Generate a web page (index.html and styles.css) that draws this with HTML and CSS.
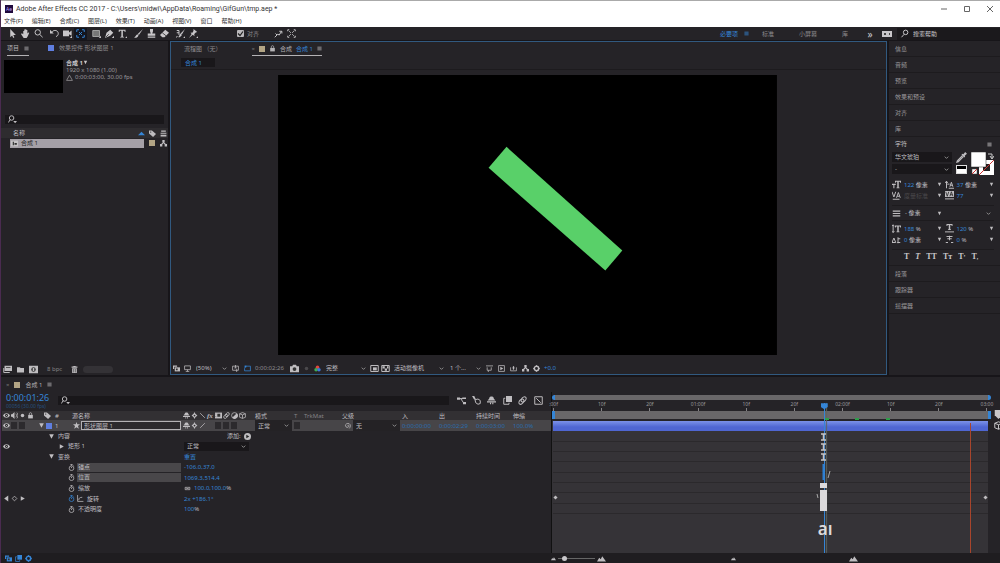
FILE: index.html
```html
<!DOCTYPE html>
<html lang="zh-CN">
<head>
<meta charset="utf-8">
<title>Adobe After Effects CC 2017</title>
<link rel="stylesheet" href="styles.css">
</head>
<body>
<svg class="sprite" aria-hidden="true">
  <symbol id="arrow" viewBox="0 0 12 12"><path d="M3 0v11l2.500-2.500L7 12l1.500-1L7 8h3.500z"/></symbol>
  <symbol id="hand" viewBox="0 0 12 12"><path d="M3 7V2.500h1.300V5 .8h1.400V5 .3h1.400V5 1.200h1.400V6l1.200-1.500 1.300.6L9 9.500 7.500 12h-4L0 6.500l1.200-.7z"/></symbol>
  <symbol id="zoom" viewBox="0 0 12 12"><g class="ln"><circle cx="5" cy="4.500" r="3.600"/><path d="M7.600 7.200 11.500 11"/></g></symbol>
  <symbol id="find" viewBox="0 0 12 12"><g class="ln"><circle cx="7.500" cy="4.500" r="3"/><path d="M5.500 7 2 11"/></g></symbol>
  <symbol id="finddrop" viewBox="0 0 12 12"><g class="ln"><circle cx="4.800" cy="4" r="3"/><path d="M3 6 .5 10"/></g><path d="M7 8h5l-2.500 3z"/></symbol>
  <symbol id="rotate" viewBox="0 0 12 12"><path class="ln" d="M3 3.500c3-3 8-1.500 8 2.500 0 2-1 3.500-3 4"/><path d="M0 1v5h5z"/></symbol>
  <symbol id="camera" viewBox="0 0 12 12"><path d="M0 2h8v2.500L11.500 2v7L8 7v2.500H0zM9 12l3-3v3z"/></symbol>
  <symbol id="anchor" viewBox="0 0 12 12"><path class="ln" d="M1 4V1h3M8 1h3v3M11 8v3H8M4 11H1V8M4 4l4 4M8 4 4 8"/></symbol>
  <symbol id="rect" viewBox="0 0 12 12"><path fill="#777" stroke="#bbb" d="M1 2h9v8H1z"/><path d="M9 12l3-3v3z"/></symbol>
  <symbol id="pen" viewBox="0 0 12 12"><path d="M0 12 2 5l5-4 4 4-4 4zM9 12l3-3v3z"/><path stroke="#222" d="M1 11l4-4"/></symbol>
  <symbol id="type" viewBox="0 0 12 12"><path d="M1 1h9v3H9L8.500 2.200H6.500V10l1.500.5v.7H3v-.7l1.500-.5V2.200h-2L2 4H1zM9.500 12l2.500-2.500V12z"/></symbol>
  <symbol id="brush" viewBox="0 0 12 12"><path d="M12 0 6.500 8 5 6.500zM4.500 7 6 8.500C5 11 3 12 0 11.500 2 11 2.500 8 4.500 7z"/></symbol>
  <symbol id="stamp" viewBox="0 0 12 12"><path d="M4 0h4v3L7 6h4v3H1V6h4L4 3zM1 10h10v1.500H1z"/></symbol>
  <symbol id="eraser" viewBox="0 0 12 12"><path d="M7 1l5 4-6 6H3L0 8z"/><path stroke="#222" d="M3 5l5 4"/></symbol>
  <symbol id="roto" viewBox="0 0 12 12"><path d="M12 0 8 7 6 6zM6 6l2 2-3 3H3z"/><path class="ln" d="M1 2h3v6M1 5h3M2 10l-2 1"/><path d="M9.500 12l2.500-2.500V12z"/></symbol>
  <symbol id="pin" viewBox="0 0 12 12"><path d="M6 0l5 4-2 .5-2 2 .3 3L5 7.500 0 12l3.500-5.500L2 5l3-.3L6 2zM9.500 12l2.500-2.500V12z"/></symbol>
  <symbol id="snap" viewBox="0 0 12 12"><path class="ln" d="M1 11l4-4 2 1 3-5M7 3h3.500v3M2 6l2 2"/></symbol>
  <symbol id="frame" viewBox="0 0 12 12"><path class="ln" d="M1 3V1h2M9 1h2v2M11 9v2H9M3 11H1V9M3 3l2 2M9 3 7 5M3 9l2-2M9 9 7 7"/></symbol>
  <symbol id="menu" viewBox="0 0 12 12"><path d="M1 2h10v1.600H1zM1 5.200h10v1.600H1zM1 8.400h10V10H1z"/></symbol>
  <symbol id="tri" viewBox="0 0 12 12"><path d="M2 2h8L6 10z"/></symbol>
  <symbol id="triright" viewBox="0 0 12 12"><path d="M3 2v8l7-4z"/></symbol>
  <symbol id="trileft" viewBox="0 0 12 12"><path d="M9 1v10L2 6z"/></symbol>
  <symbol id="triup" viewBox="0 0 12 12"><path d="M0 9h12L6 3z"/></symbol>
  <symbol id="tag" viewBox="0 0 12 12"><path d="M0 1h5l7 6-5 5-7-6z"/><circle cx="3" cy="3.500" r="1" fill="#222"/></symbol>
  <symbol id="stack" viewBox="0 0 12 12"><path d="M2 1h8v2H2zM1 4.500h10v2H1zM1 8h10v3H1z"/></symbol>
  <symbol id="tree" viewBox="0 0 12 12"><path d="M4 0h4v4H7l3 3h2v4H8V7.500L6 5.500l-2 2V11H0V7h2l3-3H4z"/></symbol>
  <symbol id="comp" viewBox="0 0 12 12"><path fill="#c5c3c5" d="M0 1h12v10H0z"/><path fill="#333" d="M3 3h2v6H3zM6 5h4v3H6z"/></symbol>
  <symbol id="folder" viewBox="0 0 12 12"><path d="M0 2h5l1 1.500h6V11H0z"/></symbol>
  <symbol id="footage" viewBox="0 0 12 12"><path d="M2 1h10v7H2z"/><path class="ln" d="M9 10H1V4"/><path fill="#333" d="M4 3h6v1H4z"/></symbol>
  <symbol id="newcomp" viewBox="0 0 12 12"><path d="M0 1h12v10H0z"/><circle cx="6" cy="6" r="3" fill="#333"/><path d="M5 4h2v4H5z"/></symbol>
  <symbol id="trash" viewBox="0 0 12 12"><path d="M4 0h4v1h3v2H1V1h3zM2 4h8v8H2z"/><path stroke="#333" d="M4.500 5v6M7.500 5v6"/></symbol>
  <symbol id="layers" viewBox="0 0 12 12"><path d="M0 1h7v2H2v4H0z"/><path d="M3 4h9v7H3z"/><path fill="#333" d="M5 6h3v3H5z"/></symbol>
  <symbol id="monitor" viewBox="0 0 12 12"><path class="ln" d="M1 1.500h10v6.500H1zM3 11h6M6 8v3"/></symbol>
  <symbol id="guides" viewBox="0 0 12 12"><path class="ln" d="M1 2h10v7H1zM6 0v5M8 7v5M4 5h4"/></symbol>
  <symbol id="mask" viewBox="0 0 12 12"><path class="ln" d="M3 2h8v8H1V6z"/><path d="M1 1h3v3H1z"/></symbol>
  <symbol id="photo" viewBox="0 0 12 12"><path d="M0 3h3l1-2h4l1 2h3v8H0z"/><circle cx="6" cy="6.700" r="2.500" fill="#333"/></symbol>
  <symbol id="rgb" viewBox="0 0 12 12"><circle cx="6" cy="4" r="3" fill="#e0483c"/><circle cx="3.500" cy="8" r="3" fill="#3fae52"/><circle cx="8.500" cy="8" r="3" fill="#3f77e0"/></symbol>
  <symbol id="region" viewBox="0 0 12 12"><path class="ln" d="M1 2h10v8H1z"/><path d="M4 4.500h5v4H4z"/></symbol>
  <symbol id="checker" viewBox="0 0 12 12"><path class="ln" d="M1 2h10v8H1z"/><path d="M2 3h3v3H2zM5 6h3v3H5zM8 3h2v3H8z"/></symbol>
  <symbol id="pixel" viewBox="0 0 12 12"><path class="ln" d="M0 1.500h12M2 4v5h7V4M4 9v3"/></symbol>
  <symbol id="fast" viewBox="0 0 12 12"><path class="ln" d="M1 1h10v10H1z"/><path d="M4 3v6l5-3z"/></symbol>
  <symbol id="chart" viewBox="0 0 12 12"><path class="ln" d="M1 4v6h10V4M4 5h4"/><path d="M5 2h2v6H5z"/></symbol>
  <symbol id="gear" viewBox="0 0 12 12"><circle cx="6" cy="6" r="3.800" fill="none" stroke="currentColor" stroke-width="2.600"/><path class="ln" d="M6 0v2M6 10v2M0 6h2M10 6h2"/></symbol>
  <symbol id="dropper" viewBox="0 0 12 12"><path class="ln" d="M7 4 1.500 9.500 1 11l1.500-.5L8 5"/><path d="M6 3l1-1 1 .5L10 0l2 2-2.500 2 .5 1-1 1z"/></symbol>
  <symbol id="eye" viewBox="0 0 12 12"><path d="M0 6c3-5 9-5 12 0-3 5-9 5-12 0z"/><circle cx="6" cy="6" r="2.400" fill="#222"/><circle cx="6" cy="6" r="1"/></symbol>
  <symbol id="sound" viewBox="0 0 12 12"><path d="M0 4h2l4-4v12L2 8H0z"/><path class="ln" d="M8 3c2 2 2 4 0 6M10 1c2.500 3 2.500 7 0 10"/></symbol>
  <symbol id="dot" viewBox="0 0 12 12"><circle cx="6" cy="6" r="3"/></symbol>
  <symbol id="lock" viewBox="0 0 12 12"><path d="M2 5h8v6H2z"/><path class="ln" d="M4 5V3c0-2.500 4-2.500 4 0v2"/></symbol>
  <symbol id="shy" viewBox="0 0 12 12"><path d="M1 6c0-2 2-1 2-3 0-3 6-3 6 0 0 2 2 1 2 3zM0 7h12v1.500H0zM4 9h1.500v2H4zM7 9h1.500v2H7z"/></symbol>
  <symbol id="sun" viewBox="0 0 12 12"><path d="M6 0l1.500 3L11 6 7.500 9 6 12 4.500 9 1 6l3.500-3z"/><circle cx="6" cy="6" r="1.500" fill="#333"/></symbol>
  <symbol id="slash" viewBox="0 0 12 12"><path class="ln" d="M2 2l8 8"/></symbol>
  <symbol id="slashup" viewBox="0 0 12 12"><path class="ln" d="M2 10l8-8"/></symbol>
  <symbol id="film" viewBox="0 0 12 12"><path d="M0 1h12v10H0z"/><path fill="#333" d="M4 3h5v5H4zM1 3h1v1H1zM1 7h1v1H1z"/></symbol>
  <symbol id="blur" viewBox="0 0 12 12"><g class="ln"><ellipse cx="7.500" cy="4.500" rx="2.600" ry="4" transform="rotate(40 7.500 4.500)"/><ellipse cx="4.500" cy="7.500" rx="2.600" ry="4" transform="rotate(40 4.500 7.500)"/></g></symbol>
  <symbol id="half" viewBox="0 0 12 12"><circle class="ln" cx="6" cy="6" r="5"/><path d="M10 2A5.500 5.500 0 1 1 2 10z"/></symbol>
  <symbol id="cube" viewBox="0 0 12 12"><path class="ln" d="M6 1l5 2v6l-5 2-5-2V3zM1 3l5 2 5-2M6 5v6"/></symbol>
  <symbol id="star" viewBox="0 0 12 12"><path d="M6 0l1.500 4H12L8.500 7 10 11.500 6 9l-4 2.500L3.500 7 0 4h4.500z"/></symbol>
  <symbol id="watch" viewBox="0 0 12 12"><path class="ln" d="M4 1h4M6 1v2M6 7V5M9.500 2.500l1 1"/><circle class="ln" cx="6" cy="7.200" r="4"/></symbol>
  <symbol id="graph" viewBox="0 0 12 12"><path class="ln" d="M1 0v11h10M3 9c0-4 2-5 6-5"/></symbol>
  <symbol id="kf" viewBox="0 0 12 12"><path class="ln" d="M6 2l4 4-4 4-4-4z"/></symbol>
  <symbol id="kffull" viewBox="0 0 12 12"><path d="M6 1l5 5-5 5-5-5z"/></symbol>
  <symbol id="link" viewBox="0 0 12 12"><path class="ln" d="M6 4H2v4h4M6 4h4v4H6M4 6h4"/></symbol>
  <symbol id="whip" viewBox="0 0 12 12"><path class="ln" d="M6 6c1-1.500 3 0 2 2S3 9.500 2.500 6.500 6 1.500 9 3s2 6 0 8"/></symbol>
  <symbol id="add" viewBox="0 0 12 12"><circle cx="6" cy="6" r="6"/><path fill="#222" d="M4 3v6l5-3z"/></symbol>
  <symbol id="flow" viewBox="0 0 12 12"><path d="M0 2h4v3H0zM7 2h5v2H7zM8 8h4v3H8z"/><path class="ln" d="M4 3.500h4M5 3.500l4 6"/></symbol>
  <symbol id="draft" viewBox="0 0 12 12"><path d="M0 0h3l2 4-2 1z"/><path class="ln" d="M4 5l4-1 3 2v4l-3 1-3-2z"/></symbol>
  <symbol id="blend" viewBox="0 0 12 12"><path d="M4 0h8v8H4z"/><path class="ln" d="M3 3H1v8h7V9"/></symbol>
  <symbol id="curve" viewBox="0 0 12 12"><path class="ln" d="M1 1h10v10H1zM3 3l6 6"/></symbol>
  <symbol id="mountain" viewBox="0 0 12 12"><path d="M0 10l3-5 2 2 2-4 5 7z"/></symbol>
  <symbol id="height" viewBox="0 0 12 12"><path d="M4 2h8v2.500H11L10.500 3.300H9V10h1v1H6v-1h1V3.300H5.500L5 4.500H4z"/><path class="ln" d="M1.500 2v9M0 3l1.500-2L3 3M0 9.500 1.500 11.500 3 9.500"/></symbol>
  <symbol id="fsize" viewBox="0 0 12 12"><path d="M4 1h8v2.500H11L10.500 2.300H9V10h1v1H6v-1h1V2.300H5.500L5 3.500H4zM0 5h5v1.500H3.200V11H1.800V6.500H0z"/></symbol>
  <symbol id="leading" viewBox="0 0 12 12"><path class="ln" d="M5 11h7M6.500 9l2-6 2 6M7 7h3M2 2v9M.5 4 2 1.500 3.500 4M3 5.500h3"/></symbol>
  <symbol id="kern" viewBox="0 0 12 12"><path class="ln" d="M0 1l2.500 7L5 1M6 9l2.500-7L11 9M7 7h3M1 11h9"/></symbol>
  <symbol id="track" viewBox="0 0 12 12"><path d="M0 0h12v8H0z"/><path fill="none" stroke="#222" d="M1 1l2 6 2-6M6.500 7l2-6 2 6M7 5h3"/><path class="ln" d="M0 10.500h12"/></symbol>
  <symbol id="width" viewBox="0 0 12 12"><path d="M2 0h8v2.500H9L8.500 1.300H7V7h1v1H4V7h1V1.300H3.500L3 2.500H2z"/><path class="ln" d="M0 10.500h12"/></symbol>
  <symbol id="base" viewBox="0 0 12 12"><path class="ln" d="M0 10l2.500-6L5 10zM8 3v8M7 10h4M8 5h3"/></symbol>
  <symbol id="tsume" viewBox="0 0 12 12"><path class="ln" d="M2 2h8M3 5h6M6 1v6M1 10h3M8 10h3"/></symbol>
  <symbol id="marker" viewBox="0 0 12 12"><path d="M1 0h10v7l-5 5-5-5z"/></symbol>
  <symbol id="warn" viewBox="0 0 12 12"><path class="ln" d="M6 2l5 9H1z"/></symbol>
</svg>

<header class="titlebar">
  <span class="logo">Ae</span>
  <h1 class="title">Adobe After Effects CC 2017 - C:\Users\midwi\AppData\Roaming\GifGun\tmp.aep *</h1>
  <div class="winbtns">
    <button aria-label="最小化"><svg viewBox="0 0 8 8"><path class="ln" d="M1 4h6"/></svg></button>
    <button aria-label="最大化"><svg viewBox="0 0 8 8"><path class="ln" d="M1.500 1.500h5v5h-5z"/></svg></button>
    <button aria-label="关闭"><svg viewBox="0 0 8 8"><path class="ln" d="M1 1l6 6M7 1 1 7"/></svg></button>
  </div>
</header>
<nav class="menubar">
  <button>文件(F)</button><button>编辑(E)</button><button>合成(C)</button><button>图层(L)</button><button>效果(T)</button><button>动画(A)</button><button>视图(V)</button><button>窗口</button><button>帮助(H)</button>
</nav>

<div class="toolbar">
  <div class="tools">
    <div class="toolgroup">
      <button aria-label="选取"><svg class="ic"><use href="#arrow"/></svg></button>
      <button aria-label="手形"><svg class="ic"><use href="#hand"/></svg></button>
      <button aria-label="缩放"><svg class="ic"><use href="#zoom"/></svg></button>
    </div>
    <div class="toolgroup">
      <button aria-label="旋转"><svg class="ic"><use href="#rotate"/></svg></button>
      <button aria-label="摄像机"><svg class="ic"><use href="#camera"/></svg></button>
      <button class="active" aria-label="锚点"><svg class="ic"><use href="#anchor"/></svg></button>
    </div>
    <div class="toolgroup">
      <button aria-label="矩形"><svg class="ic"><use href="#rect"/></svg></button>
      <button aria-label="钢笔"><svg class="ic"><use href="#pen"/></svg></button>
      <button aria-label="文字"><svg class="ic"><use href="#type"/></svg></button>
    </div>
    <div class="toolgroup">
      <button aria-label="画笔"><svg class="ic"><use href="#brush"/></svg></button>
      <button aria-label="图章"><svg class="ic"><use href="#stamp"/></svg></button>
      <button aria-label="橡皮擦"><svg class="ic"><use href="#eraser"/></svg></button>
    </div>
    <div class="toolgroup">
      <button aria-label="Roto"><svg class="ic"><use href="#roto"/></svg></button>
      <button aria-label="操控"><svg class="ic"><use href="#pin"/></svg></button>
    </div>
  </div>
  <label class="snap"><input type="checkbox" checked>对齐</label>
  <div class="toolgroup snapopts">
    <button aria-label="边缘"><svg class="ic"><use href="#snap"/></svg></button>
    <button aria-label="框架"><svg class="ic"><use href="#frame"/></svg></button>
  </div>
  <div class="workspaces">
    <button class="on">必要项<svg class="ic xs"><use href="#menu"/></svg></button>
    <button>标准</button><button>小屏幕</button><button>库</button>
  </div>
  <button class="more" aria-label="更多">»</button>
  <span class="badge"><i></i><i></i></span>
  <label class="help"><svg class="ic"><use href="#find"/></svg><input type="text" aria-label="搜索帮助" value="搜索帮助"></label>
</div>

<main class="main">
  <section class="panel project">
    <div class="tabs">
      <button class="tab on">项目<svg class="ic xs"><use href="#menu"/></svg></button>
      <button class="tab"><i class="sw blue"></i>效果控件 形状图层 1</button>
    </div>
    <div class="info">
      <div class="thumb"></div>
      <div class="meta">
        <strong>合成 1<svg class="ic xs"><use href="#tri"/></svg></strong>
        <span>1920 x 1080 (1.00)</span>
        <span class="dur"><svg class="ic sm"><use href="#warn"/></svg>0:00:03:00, 30.00 fps</span>
      </div>
    </div>
    <label class="search"><svg class="ic"><use href="#finddrop"/></svg><input type="text" aria-label="搜索项目"></label>
    <div class="plist">
      <div class="phead"><span class="pname">名称</span><svg class="ic sm cyan"><use href="#triup"/></svg><svg class="ic sm"><use href="#tag"/></svg><svg class="ic sm"><use href="#stack"/></svg></div>
      <div class="prow"><span class="pname"><svg class="ic sm"><use href="#comp"/></svg>合成 1</span><i class="sw sand"></i><svg class="ic sm"><use href="#tree"/></svg></div>
    </div>
    <div class="pfoot">
      <button aria-label="解释素材"><svg class="ic"><use href="#footage"/></svg></button>
      <button aria-label="新建文件夹"><svg class="ic sm"><use href="#folder"/></svg></button>
      <button aria-label="新建合成"><svg class="ic"><use href="#newcomp"/></svg></button>
      <button class="bpc">8 bpc</button>
      <button aria-label="删除"><svg class="ic sm"><use href="#trash"/></svg></button>
      <span class="pscroll"></span>
    </div>
  </section>

  <section class="panel viewer">
    <div class="tabs">
      <button class="tab flowtab">流程图 （无）</button>
      <button class="tab on comptab"><span class="x">×</span><i class="sw sand"></i><svg class="ic sm"><use href="#lock"/></svg><span>合成</span><span class="cyan">合成 1</span><svg class="ic xs"><use href="#menu"/></svg></button>
    </div>
    <div class="crumb"><button>合成 1</button></div>
    <div class="stage">
      <svg viewBox="0 0 500 281" role="img" aria-label="形状图层 1"><path fill="#000" d="M0 0h500v281H0z"/><path fill="#59d069" d="M229 72 345 176 328 196 211 93z"/></svg>
    </div>
    <div class="vfoot">
      <button aria-label="始终预览"><svg class="ic sm"><use href="#layers"/></svg></button>
      <button aria-label="主查看器"><svg class="ic sm"><use href="#monitor"/></svg></button>
      <select aria-label="放大率"><option>(50%)</option></select>
      <button aria-label="网格"><svg class="ic sm"><use href="#guides"/></svg></button>
      <button class="cyan" aria-label="蒙版"><svg class="ic sm"><use href="#mask"/></svg></button>
      <span class="vtime">0:00:02:26</span>
      <button aria-label="快照"><svg class="ic"><use href="#photo"/></svg></button>
      <button class="faint" aria-label="显示快照"><svg class="ic sm"><use href="#dot"/></svg></button>
      <button aria-label="通道"><svg class="ic sm"><use href="#rgb"/></svg></button>
      <select aria-label="分辨率"><option>完整</option></select>
      <button aria-label="目标区域"><svg class="ic"><use href="#region"/></svg></button>
      <button aria-label="透明网格"><svg class="ic"><use href="#checker"/></svg></button>
      <select aria-label="视图"><option>活动摄像机</option></select>
      <select aria-label="视图布局"><option>1 个...</option></select>
      <button aria-label="像素长宽比"><svg class="ic sm"><use href="#pixel"/></svg></button>
      <button aria-label="快速预览"><svg class="ic sm"><use href="#fast"/></svg></button>
      <button aria-label="时间轴"><svg class="ic sm"><use href="#chart"/></svg></button>
      <button aria-label="流程图"><svg class="ic sm"><use href="#tree"/></svg></button>
      <button aria-label="曝光"><svg class="ic sm"><use href="#gear"/></svg></button>
      <span class="cyan">+0.0</span>
    </div>
  </section>

  <aside class="panel side">
    <button class="fold">信息</button>
    <button class="fold">音频</button>
    <button class="fold">预览</button>
    <button class="fold">效果和预设</button>
    <button class="fold">对齐</button>
    <button class="fold">库</button>
    <div class="char">
      <h2 class="charhead">字符<svg class="ic xs"><use href="#menu"/></svg></h2>
      <div class="fontrow">
        <div class="fonts">
          <select aria-label="字体"><option>华文琥珀</option></select>
          <select aria-label="字体样式"><option>-</option></select>
        </div>
        <div class="pick"><svg class="ic big"><use href="#dropper"/></svg><i class="bw"></i></div>
        <svg class="colors" viewBox="0 0 23 23"><path fill="#fff" d="M8 8h15v15H8z"/><path fill="#222" d="M12 12h7v7h-7z"/><path stroke="#c33" d="M8 23 23 8"/><path fill="#fff" stroke="#222" stroke-width=".5" d="M0 0h15v15H0z"/><path fill="#fff" stroke="#444" stroke-width=".5" d="M1 17h5v5H1z"/><path stroke="#c33" d="M1 22l5-5"/><path fill="none" stroke="#ccc" d="M17 2h4v4M19 4l2 3 2-3"/></svg>
      </div>
      <div class="metrics">
        <svg class="ic"><use href="#fsize"/></svg><span><b>122</b> 像素</span><svg class="ic xs"><use href="#tri"/></svg>
        <svg class="ic"><use href="#leading"/></svg><span><b>37</b> 像素</span><svg class="ic xs"><use href="#tri"/></svg>
        <svg class="ic"><use href="#kern"/></svg><span class="faint">度量标准</span><svg class="ic xs"><use href="#tri"/></svg>
        <svg class="ic"><use href="#track"/></svg><span><b>77</b></span><svg class="ic xs"><use href="#tri"/></svg>
      </div>
      <div class="stroke"><svg class="ic"><use href="#menu"/></svg><span>- 像素</span><svg class="ic xs"><use href="#tri"/></svg><select aria-label="描边方式"><option></option></select></div>
      <div class="metrics">
        <svg class="ic"><use href="#height"/></svg><span><b>188</b> %</span><svg class="ic xs"><use href="#tri"/></svg>
        <svg class="ic"><use href="#width"/></svg><span><b>120</b> %</span><svg class="ic xs"><use href="#tri"/></svg>
        <svg class="ic"><use href="#base"/></svg><span><b>0</b> 像素</span><svg class="ic xs"><use href="#tri"/></svg>
        <svg class="ic"><use href="#tsume"/></svg><span><b>0</b> %</span><svg class="ic xs"><use href="#tri"/></svg>
      </div>
      <div class="faces"><button>T</button><button class="it">T</button><button>TT</button><button class="sc">Tт</button><button>T<sup>’</sup></button><button>T<sub>,</sub></button></div>
    </div>
    <button class="fold">段落</button>
    <button class="fold">跟踪器</button>
    <button class="fold">摇摆器</button>
  </aside>
</main>

<section class="timeline">
  <div class="tabs ttabs"><button class="tab"><span class="x">×</span><i class="sw sand"></i>合成 1<svg class="ic xs"><use href="#menu"/></svg></button></div>
  <div class="tbody">
    <div class="layers">
      <div class="ttop">
        <div class="clock"><strong>0:00:01:26</strong><small>00056 (30.00 fps)</small></div>
        <label class="search"><svg class="ic"><use href="#finddrop"/></svg><input type="text" aria-label="搜索图层"></label>
        <div class="topts">
          <button aria-label="微型流程图"><svg class="ic"><use href="#flow"/></svg></button>
          <button aria-label="草图 3D"><svg class="ic"><use href="#draft"/></svg></button>
          <button aria-label="消隐"><svg class="ic"><use href="#shy"/></svg></button>
          <button aria-label="帧混合"><svg class="ic"><use href="#blend"/></svg></button>
          <button aria-label="运动模糊"><svg class="ic"><use href="#blur"/></svg></button>
          <button aria-label="图表编辑器"><svg class="ic"><use href="#curve"/></svg></button>
        </div>
      </div>
      <div class="lrow lhead">
        <span class="av"><svg class="ic sm"><use href="#eye"/></svg><svg class="ic sm"><use href="#sound"/></svg><svg class="ic sm"><use href="#dot"/></svg><svg class="ic sm"><use href="#lock"/></svg></span>
        <span class="lab"><svg class="ic sm"><use href="#tag"/></svg></span><span>#</span><span>源名称</span>
        <span class="switches"><svg class="ic sm"><use href="#shy"/></svg><svg class="ic sm"><use href="#sun"/></svg><svg class="ic sm"><use href="#slash"/></svg><em>fx</em><svg class="ic sm"><use href="#film"/></svg><svg class="ic sm"><use href="#blur"/></svg><svg class="ic sm"><use href="#half"/></svg><svg class="ic sm"><use href="#cube"/></svg></span>
        <span>模式</span><span class="grey">T</span><span class="grey">TrkMat</span><span>父级</span><span>入</span><span>出</span><span>持续时间</span><span>伸缩</span>
      </div>
      <div class="rows">
        <div class="lrow layer">
          <span class="av"><svg class="ic sm"><use href="#eye"/></svg><i class="cell"></i><i class="cell"></i><i></i></span>
          <span class="lab"><svg class="ic sm"><use href="#tri"/></svg><i class="sw blue"></i></span><span>1</span>
          <span class="lname"><svg class="ic sm"><use href="#star"/></svg><input type="text" aria-label="图层名称" value="形状图层 1"></span>
          <span class="switches"><svg class="ic sm"><use href="#shy"/></svg><svg class="ic sm"><use href="#sun"/></svg><svg class="ic sm"><use href="#slashup"/></svg><i></i><i class="cell"></i><i class="cell"></i><i class="cell"></i><i></i></span>
          <select aria-label="模式"><option>正常</option></select><i class="cell"></i><span></span>
          <span class="parent"><svg class="ic sm"><use href="#whip"/></svg><select aria-label="父级"><option>无</option></select></span>
          <span class="num">0:00:00:00</span><span class="num">0:00:02:29</span><span class="num">0:00:03:00</span><span class="num">100.0%</span>
        </div>
        <div class="prop"><span></span><span class="l1"><svg class="ic sm"><use href="#tri"/></svg>内容</span><span class="addrow">添加:<button aria-label="添加"><svg class="ic sm"><use href="#add"/></svg></button></span></div>
        <div class="prop"><span class="av"><svg class="ic sm"><use href="#eye"/></svg></span><span class="l2"><svg class="ic sm"><use href="#triright"/></svg>矩形 1</span><select aria-label="混合模式"><option>正常</option></select></div>
        <div class="prop"><span></span><span class="l1"><svg class="ic sm"><use href="#tri"/></svg>变换</span><a class="cyan" href="#reset">重置</a></div>
        <div class="prop"><span></span><span class="l3"><svg class="ic sm"><use href="#watch"/></svg><span class="hl">锚点</span></span><span class="cyan">-106.0,37.0</span></div>
        <div class="prop"><span></span><span class="l3"><svg class="ic sm"><use href="#watch"/></svg><span class="hl">位置</span></span><span class="cyan">1069.3,514.4</span></div>
        <div class="prop"><span></span><span class="l3"><svg class="ic sm"><use href="#watch"/></svg><span>缩放</span></span><span class="val"><svg class="ic sm"><use href="#link"/></svg><span><b>100.0,100.0</b>%</span></span></div>
        <div class="prop"><span class="av"><svg class="ic sm"><use href="#trileft"/></svg><svg class="ic sm"><use href="#kf"/></svg><svg class="ic sm"><use href="#triright"/></svg></span><span class="l3"><svg class="ic sm cyan"><use href="#watch"/></svg><svg class="ic sm"><use href="#graph"/></svg><span>旋转</span></span><span class="cyan">2x +186.1°</span></div>
        <div class="prop"><span></span><span class="l3"><svg class="ic sm"><use href="#watch"/></svg><span>不透明度</span></span><span><b>100</b>%</span></div>
      </div>
    </div>

    <div class="time">
      <div class="nav"></div>
      <div class="ruler">
        <span>:00f</span><span>10f</span><span>20f</span><span>01:00f</span><span>10f</span><span>20f</span><span>02:00f</span><span>10f</span><span>20f</span><span>03:00</span>
      </div>
      <div class="work"></div>
      <div class="tracks">
        <div class="bar"></div><div></div><div></div><div></div><div></div><div></div><div></div>
        <div class="keys"><svg class="ic xs"><use href="#kffull"/></svg><svg class="ic xs"><use href="#kffull"/></svg></div>
        <div></div>
      </div>
      <div class="cursor"><span class="head"></span>
        <svg class="ghost" viewBox="0 0 20 80"><path fill="none" stroke="#c5c3c5" stroke-width="1.500" d="M7 2h5M9.500 2v6M7 8h5M7 12h5M9.500 12v6M7 18h5M7 22h5M9.500 22v6M7 28h5"/><path fill="none" stroke="#2e7fd0" stroke-width="2" d="M9.500 32v16"/><path stroke="#aaa" d="M16 39l-2 7M3 62l1 4"/><path fill="#dcdadc" d="M6 51h7v5H6zM6 58h7v21H6z"/></svg>
        <span class="echo">aı</span>
      </div>
      <div class="preview"></div>
      <i class="cache c1"></i><i class="cache c2"></i><i class="cache c3"></i>
    </div>
    <div class="edge"><svg class="ic"><use href="#marker"/></svg><svg class="ic"><use href="#cube"/></svg></div>
  </div>
  <footer class="tfoot">
    <div class="toggles">
      <button aria-label="图层开关"><svg class="ic sm"><use href="#layers"/></svg></button>
      <button aria-label="转换控制"><svg class="ic sm"><use href="#blend"/></svg></button>
      <button aria-label="入点出点"><svg class="ic sm"><use href="#gear"/></svg></button>
    </div>
    <div class="zoombar"><svg class="ic xs"><use href="#mountain"/></svg><input type="range" aria-label="缩放时间轴" min="0" max="100" value="15"><svg class="ic"><use href="#mountain"/></svg></div>
    <div class="hscroll"><svg class="ic xs"><use href="#mountain"/></svg><svg class="ic"><use href="#mountain"/></svg></div>
  </footer>
</section>
</body>
</html>
```
FILE: styles.css
```css
* { box-sizing: border-box; }

:root {
  --panel: #252327;
  --gap: #171519;
  --dark: #19171a;
  --row: #3b393c;
  --text: #bfbdc0;
  --blue: #3585d6;
}

body {
  margin: 0;
  height: 100vh;
  display: flex;
  flex-direction: column;
  overflow: hidden;
  background: var(--gap);
  color: var(--text);
  font: 6px/8px "Noto Sans", "Noto Sans CJK SC", sans-serif;
  border-left: 1px solid #4a2b50;
}

button, select, input {
  font: inherit;
  color: inherit;
  background: none;
  border: 0;
  padding: 0;
  margin: 0;
  min-width: 0;
}
button { display: inline-flex; align-items: center; justify-content: center; white-space: nowrap; }
i { font-style: normal; }
b { font-weight: 400; color: var(--blue); }
select {
  appearance: none;
  height: 9px;
  padding-left: 3px;
  border-radius: 0;
  background: url("data:image/svg+xml,%3Csvg xmlns='http://www.w3.org/2000/svg' viewBox='0 0 8 8'%3E%3Cpath fill='none' stroke='%23999' d='M2 3l2 2 2-2'/%3E%3C/svg%3E") right 2px center / 7px no-repeat;
}
a { text-decoration: none; }

.sprite { position: absolute; width: 0; height: 0; }
.ic { width: 9px; height: 9px; flex: none; fill: currentColor; overflow: visible; }
.ic.sm { width: 7px; height: 7px; }
.ic.xs { width: 5px; height: 5px; }
.ic.big { width: 11px; height: 11px; }
.ln { fill: none; stroke: currentColor; stroke-width: 1.3; }
.cyan { color: var(--blue); }
.grey { color: #858386; }
.faint { color: #4a484b; }
.sw { width: 6px; height: 6px; flex: none; }
.blue { background: #5f7ee0; }
.sand { background: #b3a585; }

/* window frame */
.titlebar {
  height: 16px;
  display: flex;
  align-items: center;
  padding-left: 4px;
  background: #fff;
  border-top: 1px solid #aaa;
  color: #333;
}
.logo { width: 8px; height: 8px; background: #1f0a3c; color: #b9a0ff; text-align: center; font-size: 5px; }
.title { flex: 1; margin: 0 0 0 3px; font: 7px/12px Roboto, sans-serif; }
.winbtns { display: flex; gap: 15px; padding-right: 6px; color: #666; }
.winbtns button, .winbtns svg { width: 8px; height: 8px; }
.winbtns .ln { stroke-width: 1; }
.menubar {
  height: 11px;
  display: flex;
  gap: 9px;
  padding: 0 3px 1px;
  background: #fff;
  color: #333;
}

.toolbar {
  height: 14px;
  flex: none;
  display: flex;
  align-items: center;
  background: var(--panel);
  padding-left: 5px;
  border-bottom: 1px solid var(--gap);
  color: #c9c7ca;
}
.tools { display: flex; gap: 3px; width: 231px; }
.toolgroup { display: flex; }
.toolgroup button { width: 13px; height: 12px; }
.toolgroup .active { color: var(--blue); background: #14161f; }
.snap { display: flex; align-items: center; gap: 3px; color: #8d8b8e; }
.snap input { appearance: none; width: 7px; height: 7px; border-radius: 1px; background: #bbb9bc; }
.snap input:checked {
  background: #bbb9bc url("data:image/svg+xml,%3Csvg xmlns='http://www.w3.org/2000/svg' viewBox='0 0 7 7'%3E%3Cpath fill='none' stroke='%23222' stroke-width='1.2' d='M1 3.500l2 2 3-4'/%3E%3C/svg%3E") center / 7px no-repeat;
}
.snapopts { padding-left: 13px; }
.workspaces { margin-left: auto; display: flex; gap: 25px; color: #8d8b8e; }
.workspaces .on { color: var(--blue); gap: 6px; margin-right: -12px; }
.more { width: 12px; margin-left: 16px; font-size: 10px; }
.badge { display: flex; gap: 1px; width: 10px; height: 6px; margin: 0 0 0 6px; padding: 1px; background: #c9c7ca; }
.badge i { flex: 1; background: #444; border: 1px solid #c9c7ca; }
.help { display: flex; align-items: center; gap: 4px; width: 103px; height: 12px; margin-left: 5px; padding-left: 3px; background: #1b191c; }
.help input { flex: 1; }

/* upper panels */
.main {
  flex: 335 1 0;
  min-height: 0;
  display: grid;
  grid-template: minmax(0, 1fr) / 167px minmax(0, 1fr) 111px;
  gap: 2px;
}
.panel { background: var(--panel); display: flex; flex-direction: column; min-width: 0; min-height: 0; }
.tabs { display: flex; align-items: flex-start; height: 15px; flex: none; padding-left: 6px; }
.tab { height: 15px; gap: 5px; color: #8d8b8e; border-bottom: 1px solid transparent; }
.tab.on { color: #b4b2b5; border-color: #b4b2b5; }
.tab .x { color: #777; }

.project .tabs { gap: 19px; }
.info { display: flex; gap: 3px; padding: 4px 3px 0; height: 55px; }
.thumb { width: 59px; height: 33px; background: #000; }
.meta { display: flex; flex-direction: column; line-height: 7px; color: #9a989b; }
.meta strong { color: #c9c7ca; }
.dur { display: flex; align-items: center; gap: 2px; }
.search { display: flex; align-items: center; height: 9px; background: var(--dark); padding-left: 3px; }
.search input { flex: 1; height: 8px; }
.project .search { margin: 4px 4px 4px; }
.phead, .prow { display: flex; align-items: center; height: 10px; padding-right: 1px; gap: 4px; }
.phead { background: #2e2c2f; }
.pname { flex: 1; display: flex; align-items: center; gap: 3px; padding-left: 12px; }
.prow .pname { background: #a5a0a7; color: #222; height: 9px; margin-left: 9px; padding-left: 1px; }
.prow { gap: 5px; }
.pfoot { display: flex; align-items: center; gap: 5px; margin-top: auto; height: 12px; padding-left: 2px; }
.bpc { margin: 0 4px; color: #858386; }
.pscroll { width: 30px; height: 7px; border-radius: 4px; background: #343236; }

.viewer { border: 1px solid #31597f; }
.viewer .tabs { padding-left: 13px; gap: 30px; height: 14px; }
.viewer .tab { height: 14px; }
.comptab { gap: 4px; }
.crumb { flex: none; height: 14px; padding: 2px 10px; border-bottom: 1px solid #1d1b1e; }
.crumb button { width: 34px; height: 9px; color: var(--blue); background: var(--dark); justify-content: flex-start; padding-left: 4px; }
.stage { flex: 1; min-height: 0; padding: 5px 2px 7px 0; }
.stage svg { display: block; width: 100%; height: 100%; }
.vfoot {
  flex: none;
  display: grid;
  grid-template-columns: 10px 12px 37px 11px 12px 36px 11px 12px 11px 46px 11px 11px 56px 37px 11px 12px 12px 12px 11px auto;
  justify-content: start;
  align-items: center;
  height: 12px;
}
.vfoot > .cyan:last-child, .vtime { padding-left: 2px; }
.vtime { color: #8d8b8e; }

.fold { justify-content: flex-start; width: 100%; height: 16px; flex: none; padding-left: 6px; border-bottom: 1px solid #1d1b1e; color: #9a989b; }
.char { flex: none; height: 129px; display: flex; flex-direction: column; padding: 0 6px 0 3px; border-bottom: 1px solid #1d1b1e; }
.charhead { display: flex; justify-content: space-between; align-items: center; height: 14px; margin: 0; padding: 0 2px 0 3px; font: inherit; color: #c9c7ca; }
.fontrow { display: flex; gap: 4px; height: 29px; align-items: flex-start; padding-top: 1px; }
.fonts { flex: 1; display: grid; gap: 2px; min-width: 0; }
.fonts select { height: 10px; background-color: var(--dark); }
.pick { display: grid; gap: 2px; }
.bw { width: 11px; height: 9px; border: 1px solid #ddd; background: linear-gradient(#000 50%, #fff 50%); }
.colors { width: 23px; height: 23px; }
.metrics { display: grid; grid-template-columns: 9px 1fr 5px 9px 1fr 5px; gap: 2px 3px; align-items: center; height: 25px; align-content: start; white-space: nowrap; }
.metrics .ic.xs { justify-self: end; }
.stroke { display: grid; grid-template-columns: 9px 28px 5px 1fr; gap: 4px; align-items: center; height: 16px; border-top: 1px solid #1d1b1e; border-bottom: 1px solid #1d1b1e; margin: 0 0 3px; }
.faces { display: flex; gap: 6px; padding: 2px 0 0 12px; border-top: 1px solid #1d1b1e; color: #c9c7ca; }
.faces button { font: bold 8px/10px "Liberation Serif", serif; }
.faces .it { font-style: italic; }
.faces sup, .faces sub { font-size: 6px; line-height: 4px; }

/* timeline */
.timeline { flex: 186 1 0; min-height: 0; display: flex; flex-direction: column; margin-top: 2px; background: var(--panel); }
.timeline .ttabs { height: 15px; padding: 1px 0 0 5px; }
.timeline .tab { height: 14px; color: #b4b2b5; }
.tbody { flex: 1; min-height: 0; display: grid; grid-template: minmax(0, 1fr) / minmax(0, 549fr) minmax(0, 441fr) 8px; }
.layers { padding-left: 1px; min-width: 0; }
.ttop { display: flex; align-items: flex-start; height: 19px; padding: 0 7px 0 4px; }
.clock { width: 52px; color: var(--blue); }
.clock strong { display: block; font: 9px/11px "Noto Sans", sans-serif; }
.clock small { display: block; font-size: 5px; line-height: 6px; color: #25507e; }
.ttop .search { flex: 1; margin-top: 4px; }
.topts { display: flex; justify-content: space-between; width: 86px; margin: 4px 1px 0 8px; }
.lrow {
  display: grid;
  grid-template-columns: 36px 17px 17px 110px 73px 39px 10px 38px 60px 37px 37px 37px minmax(0, 1fr);
  align-items: center;
  white-space: nowrap;
}
.lhead { height: 9px; background: #323033; }
.av { display: grid; grid-template-columns: repeat(4, 7px); gap: 1px; padding-left: 1px; align-items: center; }
.lab { display: flex; align-items: center; gap: 1px; }
.lhead .lab { padding-left: 6px; }
.switches { display: grid; grid-template-columns: repeat(8, 7px); gap: 1px; align-items: center; padding-left: 1px; }
.switches em { font: italic bold 7px/8px "Liberation Serif", serif; }
.cell { width: 6px; height: 7px; background: #2c2a2d; }
.rows { display: grid; grid-auto-rows: minmax(0, 1fr); height: 94px; }
.layer { background: #474548; }
.layer select { background-color: #242225; height: 100%; margin-right: 2px; }
.lname { display: flex; align-items: center; gap: 1px; padding-left: 1px; }
.lname input { flex: 1; height: 9px; padding: 0 2px; border: 1px solid #b4b2b5; background: #2c2a2d; margin-right: 1px; }
.parent { display: flex; align-items: center; gap: 2px; height: 100%; padding-left: 2px; }
.parent select { flex: 1; }
.num { color: #2b6cab; }
.prop { display: grid; grid-template-columns: 36px 146px minmax(0, 1fr); align-items: center; white-space: nowrap; }
.prop select { width: 65px; background-color: var(--dark); }
.l1, .l2, .l3, .val { display: flex; align-items: center; gap: 3px; }
.l1 { padding-left: 10px; }
.l2 { padding-left: 20px; }
.l3 { padding-left: 30px; gap: 2px; }
.l3 span:last-child { flex: 1; padding-left: 1px; }
.hl { background: #49474a; height: 9px; margin-right: 3px; }
.addrow { display: flex; gap: 3px; padding-left: 43px; }

.time { display: flex; flex-direction: column; position: relative; padding-top: 3px; min-width: 0; border-left: 1px solid #111; }
.nav, .work { flex: none; background: #696769; border: solid var(--blue); border-width: 0 3px; margin-right: 1px; }
.nav { height: 5px; border-radius: 3px; }
.work { height: 8px; margin-bottom: 1px; }
.ruler { flex: none; display: flex; justify-content: space-between; height: 11px; margin: 0 5px 0 2px; color: #9a989b; font-size: 5px; }
.ruler span { width: 0; display: flex; flex-direction: column; align-items: center; }
.ruler span::after { content: ""; width: 1px; height: 3px; background: #858386; }
.tracks { flex: 1; background: linear-gradient(#353337, #353337) 0 0 / calc(100% - 4px) 100% no-repeat; padding-left: 1px; display: grid; grid-template-rows: repeat(9, 21fr) 80fr; margin-top: 1px; }
.tracks div { border-bottom: 1px solid #2b292c; margin-right: 4px; }
.tracks .bar { background: linear-gradient(#7c92e8, #4f66d2 60%); border-color: #353337; }
.keys { display: flex; justify-content: space-between; align-items: center; }
.cursor { position: absolute; left: 61.8%; top: 11px; bottom: 0; width: 1px; background: var(--blue); box-shadow: 2px 0 1px #5f665f; }
.head { position: absolute; left: -3px; top: 0; width: 7px; height: 6px; background: var(--blue); clip-path: polygon(0 0, 100% 0, 100% 60%, 50% 100%, 0 60%); }
.ghost { position: absolute; left: -10px; top: 29px; width: 20px; height: 80px; }
.echo { position: absolute; left: -6px; top: 115px; font: 600 17px/22px "Noto Sans", sans-serif; color: #dcdadc; white-space: nowrap; }
.preview { position: absolute; left: 95%; top: 31px; bottom: 0; width: 1px; background: #a8452c; }
.cache { position: absolute; top: 26px; width: 4px; height: 2px; background: #2e9c4a; }
.c1 { left: 62%; }
.c2 { left: 69%; }
.c3 { left: 76%; }
.edge { display: flex; flex-direction: column; gap: 2px; padding: 18px 0 0 2px; color: #c9c7ca; }
.tfoot { flex: none; display: grid; grid-template-columns: minmax(0, 549fr) minmax(0, 55fr) minmax(0, 394fr); align-items: center; height: 10px; background: #1f1d20; }
.toggles { display: flex; gap: 3px; padding-left: 4px; color: var(--blue); }
.zoombar { display: flex; align-items: center; gap: 2px; }
.zoombar input { appearance: none; flex: 1; height: 1px; background: #666; }
.zoombar input::-webkit-slider-thumb { appearance: none; width: 5px; height: 5px; border-radius: 50%; background: #c9c7ca; }
.hscroll { display: flex; justify-content: space-between; align-items: center; width: 64%; padding-left: 125px; }
```
